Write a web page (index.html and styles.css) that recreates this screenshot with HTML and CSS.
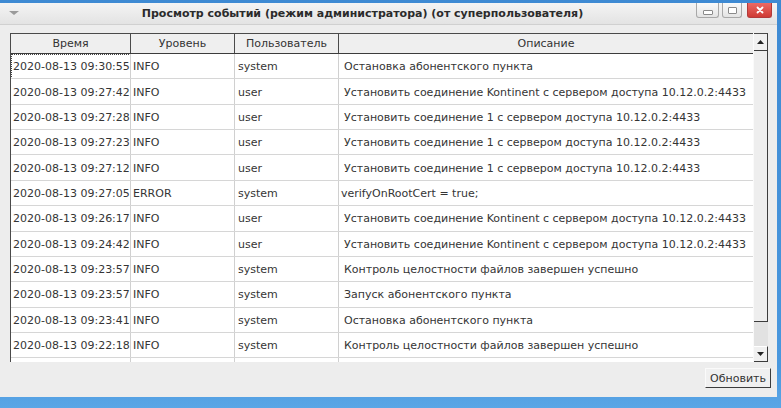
FILE: index.html
```html
<!DOCTYPE html>
<html lang="ru">
<head>
<meta charset="utf-8">
<title>Просмотр событий</title>
<link rel="stylesheet" href="styles.css">
</head>
<body>
<div class="window">
  <div class="titlebar">
    <div class="menu-icon"></div>
    <div class="title">Просмотр событий (режим администратора) (от суперпользователя)</div>
    <div class="wbtns">
      <div class="wbtn min"><span class="min-glyph"></span></div>
      <div class="wbtn max"><span class="max-glyph"></span></div>
      <div class="wbtn close"><svg width="8" height="8" viewBox="0 0 8 8"><path d="M1.5 1.5 L6.5 6.5 M6.5 1.5 L1.5 6.5" stroke="#fff" stroke-width="1.8" stroke-linecap="round"/></svg></div>
    </div>
  </div>
  <div class="content">
    <div class="view">
      <div class="table">
        <div class="head">
          <div class="hc">Время</div>
          <div class="hc">Уровень</div>
          <div class="hc">Пользователь</div>
          <div class="hc last">Описание</div>
        </div>
        <div class="body">
          <div class="row"><div class="c c1"><span class="focus">2020-08-13 09:30:55</span></div><div class="c c2">INFO</div><div class="c c3">system</div><div class="c c4">Остановка абонентского пункта</div></div>
          <div class="row"><div class="c c1">2020-08-13 09:27:42</div><div class="c c2">INFO</div><div class="c c3">user</div><div class="c c4">Установить соединение Kontinent с сервером доступа 10.12.0.2:4433</div></div>
          <div class="row"><div class="c c1">2020-08-13 09:27:28</div><div class="c c2">INFO</div><div class="c c3">user</div><div class="c c4">Установить соединение 1 с сервером доступа 10.12.0.2:4433</div></div>
          <div class="row"><div class="c c1">2020-08-13 09:27:23</div><div class="c c2">INFO</div><div class="c c3">user</div><div class="c c4">Установить соединение 1 с сервером доступа 10.12.0.2:4433</div></div>
          <div class="row"><div class="c c1">2020-08-13 09:27:12</div><div class="c c2">INFO</div><div class="c c3">user</div><div class="c c4">Установить соединение 1 с сервером доступа 10.12.0.2:4433</div></div>
          <div class="row"><div class="c c1">2020-08-13 09:27:05</div><div class="c c2">ERROR</div><div class="c c3">system</div><div class="c c4 tight">verifyOnRootCert = true;</div></div>
          <div class="row"><div class="c c1">2020-08-13 09:26:17</div><div class="c c2">INFO</div><div class="c c3">user</div><div class="c c4">Установить соединение Kontinent с сервером доступа 10.12.0.2:4433</div></div>
          <div class="row"><div class="c c1">2020-08-13 09:24:42</div><div class="c c2">INFO</div><div class="c c3">user</div><div class="c c4">Установить соединение Kontinent с сервером доступа 10.12.0.2:4433</div></div>
          <div class="row"><div class="c c1">2020-08-13 09:23:57</div><div class="c c2">INFO</div><div class="c c3">system</div><div class="c c4">Контроль целостности файлов завершен успешно</div></div>
          <div class="row"><div class="c c1">2020-08-13 09:23:57</div><div class="c c2">INFO</div><div class="c c3">system</div><div class="c c4">Запуск абонентского пункта</div></div>
          <div class="row"><div class="c c1">2020-08-13 09:23:41</div><div class="c c2">INFO</div><div class="c c3">system</div><div class="c c4">Остановка абонентского пункта</div></div>
          <div class="row"><div class="c c1">2020-08-13 09:22:18</div><div class="c c2">INFO</div><div class="c c3">system</div><div class="c c4">Контроль целостности файлов завершен успешно</div></div>
          <div class="row"><div class="c c1"></div><div class="c c2"></div><div class="c c3"></div><div class="c c4"></div></div>
        </div>
      </div>
      <div class="vscroll">
        <div class="sbtn up"><svg width="7" height="4" viewBox="0 0 7 4"><path d="M0 4 L3.5 0 L7 4 Z" fill="#222"/></svg></div>
        <div class="thumb"></div>
        <div class="track"></div>
        <div class="sbtn down"><svg width="7" height="4" viewBox="0 0 7 4"><path d="M0 0 L3.5 4 L7 0 Z" fill="#222"/></svg></div>
      </div>
    </div>
    <div class="actions">
      <button class="refresh">Обновить</button>
    </div>
  </div>
</div>
</body>
</html>
```

FILE: styles.css
```css
html, body {
  margin: 0;
  padding: 0;
}
body {
  width: 781px;
  height: 408px;
  overflow: hidden;
  background: linear-gradient(180deg, #3e8ad3 0%, #4a98de 90%, #5aa6e6 100%);
  font-family: "DejaVu Sans", sans-serif;
  font-size: 11px;
  color: #333;
}
.window {
  margin-top: 3px;
  width: 777px;
  height: 394px;
  background: #ededed;
  display: flex;
  flex-direction: column;
  box-sizing: border-box;
}
.titlebar {
  height: 21px;
  flex: none;
  display: flex;
  align-items: flex-start;
  background: linear-gradient(180deg, #f4f4f4 0%, #e3e3e3 100%);
  border-bottom: 1px solid #d0d0d0;
}
.menu-icon {
  width: 0;
  height: 0;
  margin: 8px 0 0 9px;
  border-left: 5px solid transparent;
  border-right: 5px solid transparent;
  border-top: 4px solid #9a9a9a;
}
.title {
  flex: 1;
  text-align: center;
  font-weight: bold;
  font-size: 11px;
  color: #2b2b2b;
  line-height: 21px;
  padding-left: 10px;
}
.wbtns {
  display: flex;
  gap: 3px;
  margin-right: 5px;
}
.wbtn {
  height: 15px;
  border: 1px solid #a8a8a8;
  border-top: none;
  border-radius: 0 0 3px 3px;
  background: linear-gradient(180deg, #fafafa, #e4e4e4);
  display: flex;
  align-items: center;
  justify-content: center;
  box-sizing: border-box;
}
.wbtn.min { width: 23px; }
.wbtn.max { width: 20px; }
.wbtn.close {
  width: 25px;
  margin-left: 2px;
  border-color: #b23a3a;
  background: linear-gradient(180deg, #ec6a64, #cf3a34);
}
.min-glyph {
  width: 8px;
  height: 3px;
  border: 1px solid #8a8a8a;
  border-radius: 1px;
  margin-top: 5px;
  background: #fff;
}
.max-glyph {
  width: 7px;
  height: 5px;
  border: 1px solid #8a8a8a;
  border-radius: 1px;
  background: #fff;
}
.content {
  flex: 1;
  display: flex;
  flex-direction: column;
  padding: 8px 6px 0 10px;
}
.view {
  display: flex;
  width: 758px;
  height: 329px;
  flex: none;
}
.table {
  width: 743px;
  border-left: 1px solid #4a4a4a;
  border-top: 1px solid #4a4a4a;
  background: #fff;
  overflow: hidden;
  box-sizing: border-box;
}
.head {
  display: grid;
  grid-template-columns: 120px 104px 104px 1fr;
  height: 20px;
  background: #efefef;
  border-bottom: 1px solid #3c3c3c;
  box-sizing: border-box;
}
.hc {
  text-align: center;
  line-height: 19px;
  border-right: 1px solid #4a4a4a;
  color: #333;
}
.hc.last { border-right: none; }
.row {
  display: grid;
  grid-template-columns: 120px 104px 104px 1fr;
  height: 25.36px;
  border-bottom: 1px solid #d6d6d6;
  box-sizing: border-box;
}
.c {
  border-right: 1px solid #d0d0d0;
  display: flex;
  align-items: center;
  padding-top: 1px;
  white-space: nowrap;
  overflow: hidden;
  color: #353535;
}
.c1 { padding-left: 2px; }
.c2 { padding-left: 2px; }
.c3 { padding-left: 3px; }
.c4 { padding-left: 5px; border-right: none; }
.c4.tight { padding-left: 2px; }
.focus {
  outline: 1px dotted #444;
  outline-offset: 0;
  margin-left: -1px;
  padding: 5px 0 5px 1px;
  margin-top: -1px;
}
.vscroll {
  width: 15px;
  display: flex;
  flex-direction: column;
  background: #e6e6e6;
  border-left: 1px solid #fafafa;
  box-sizing: border-box;
}
.sbtn {
  height: 18px;
  flex: none;
  background: #f0f0f0;
  border-right: 1px solid #3c3c3c;
  display: flex;
  align-items: center;
  justify-content: center;
  box-sizing: border-box;
}
.sbtn.up {
  border-bottom: 1px solid #3c3c3c;
  border-top: 1px solid #4a4a4a;
}
.sbtn.down {
  height: 16px;
  border-bottom: 1px solid #3c3c3c;
  border-top: 1px solid #fff;
}
.thumb {
  height: 271px;
  flex: none;
  background: #eeeeee;
  border-right: 1px solid #3c3c3c;
  border-bottom: 1px solid #3c3c3c;
  box-sizing: border-box;
}
.track {
  flex: 1;
  background: #e2e2e2;
}
.actions {
  display: flex;
  justify-content: flex-end;
  padding-top: 6px;
}
.refresh {
  font-family: "DejaVu Sans", sans-serif;
  font-size: 11px;
  color: #333;
  height: 20px;
  width: 66px;
  padding: 0;
  margin: 0;
  background: #f0f0f0;
  border: 1px solid;
  border-color: #fafafa #3c3c3c #3c3c3c #fafafa;
  border-radius: 0;
}
```
